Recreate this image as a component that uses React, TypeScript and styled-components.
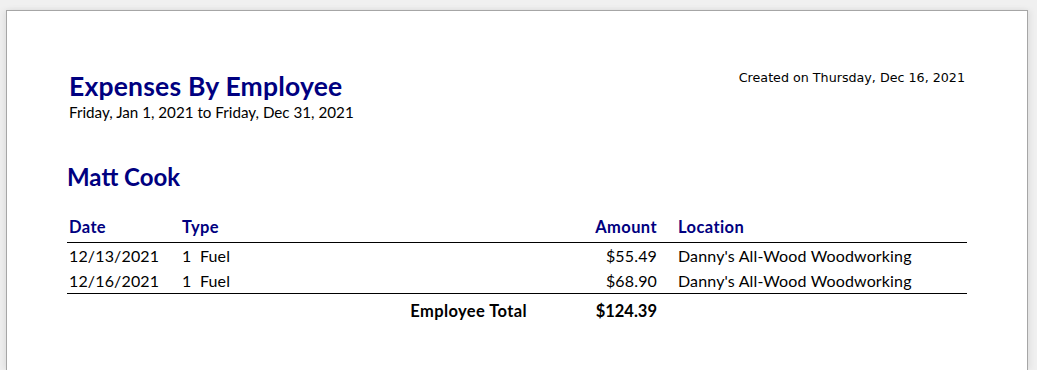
import React from "react";
import styled, { createGlobalStyle } from "styled-components";

const Global = createGlobalStyle`
  html, body { margin: 0; padding: 0; background: #f0f0f0; overflow: hidden; }
  body { font-family: Lato, "Liberation Sans", sans-serif; }
`;

const Page = styled.div`
  box-sizing: border-box;
  margin: 10px 0 0 6px;
  width: 1022px;
  height: 360px;
  background: #fff;
  border: 1px solid #a6a6a6;
  border-bottom: none;
  box-shadow: -3px 0 6px rgba(0,0,0,0.06), 3px 0 6px rgba(0,0,0,0.06);
  padding: 0 0 0 60px;
`;

const Header = styled.div`
  display: flex;
  justify-content: space-between;
  width: 900px;
  padding-top: 55px;
`;

const TitleBlock = styled.div`
  padding-left: 2px;
`;

const Title = styled.h1`
  margin: 0;
  font-weight: 700;
  font-size: 26.5px;
  letter-spacing: 0.2px;
  line-height: 40px;
  color: #000080;
`;

const Subtitle = styled.div`
  font-size: 15.2px;
  line-height: 16px;
  color: #000;
  margin-top: -2px;
`;

const Created = styled.div`
  font-family: "DejaVu Sans", sans-serif;
  font-size: 12.7px;
  line-height: 16px;
  color: #000;
  padding-top: 4px;
  padding-right: 2px;
`;

const Employee = styled.h2`
  margin: 43px 0 0 0;
  font-weight: 700;
  font-size: 24px;
  line-height: 28px;
  color: #000080;
`;

const Grid = styled.div<{ $border?: boolean }>`
  display: grid;
  grid-template-columns: 113px 400px 96px 291px;
  width: 900px;
  border-bottom: ${(p) => (p.$border ? "1px solid #000" : "none")};
`;

const HeadRow = styled(Grid)`
  margin-top: 21px;
  height: 30px;
  align-items: center;
`;

const Row = styled(Grid)`
  height: 25px;
  align-items: center;
`;

const Cell = styled.div<{ $head?: boolean; $right?: boolean; $bold?: boolean; $pr?: number }>`
  font-size: ${(p) => (p.$head || p.$bold ? 16.5 : 16)}px;
  letter-spacing: ${(p) => (p.$head || p.$bold ? 0.4 : 0.15)}px;
  line-height: 18px;
  color: ${(p) => (p.$head ? "#000080" : "#000")};
  font-weight: ${(p) => (p.$head || p.$bold ? 700 : 400)};
  text-align: ${(p) => (p.$right ? "right" : "left")};
  padding-left: ${(p) => (p.$right ? 0 : 2)}px;
  padding-right: ${(p) => p.$pr ?? 0}px;
  white-space: pre;
`;

const TotalAmount = styled(Cell)`
  letter-spacing: 0;
`;

const TotalRow = styled(Grid)`
  height: 33px;
  align-items: center;
`;

const rows = [
  { date: "12/13/2021", type: "1  Fuel", amount: "$55.49", loc: "Danny's All-Wood Woodworking" },
  { date: "12/16/2021", type: "1  Fuel", amount: "$68.90", loc: "Danny's All-Wood Woodworking" },
];

export default function App() {
  return (
    <>
      <Global />
      <Page>
        <Header>
          <TitleBlock>
            <Title>Expenses By Employee</Title>
            <Subtitle>Friday, Jan 1, 2021 to Friday, Dec 31, 2021</Subtitle>
          </TitleBlock>
          <Created>Created on Thursday, Dec 16, 2021</Created>
        </Header>
        <Employee>Matt Cook</Employee>
        <HeadRow $border>
          <Cell $head>Date</Cell>
          <Cell $head>Type</Cell>
          <Cell $head $right $pr={19}>Amount</Cell>
          <Cell $head>Location</Cell>
        </HeadRow>
        {rows.map((r, i) => (
          <Row key={i} $border={i === rows.length - 1}>
            <Cell>{r.date}</Cell>
            <Cell>{r.type}</Cell>
            <Cell $right $pr={19}>{r.amount}</Cell>
            <Cell>{r.loc}</Cell>
          </Row>
        ))}
        <TotalRow>
          <Cell />
          <Cell $right $bold $pr={53}>Employee Total</Cell>
          <TotalAmount $right $bold $pr={19}>$124.39</TotalAmount>
          <Cell />
        </TotalRow>
      </Page>
    </>
  );
}
